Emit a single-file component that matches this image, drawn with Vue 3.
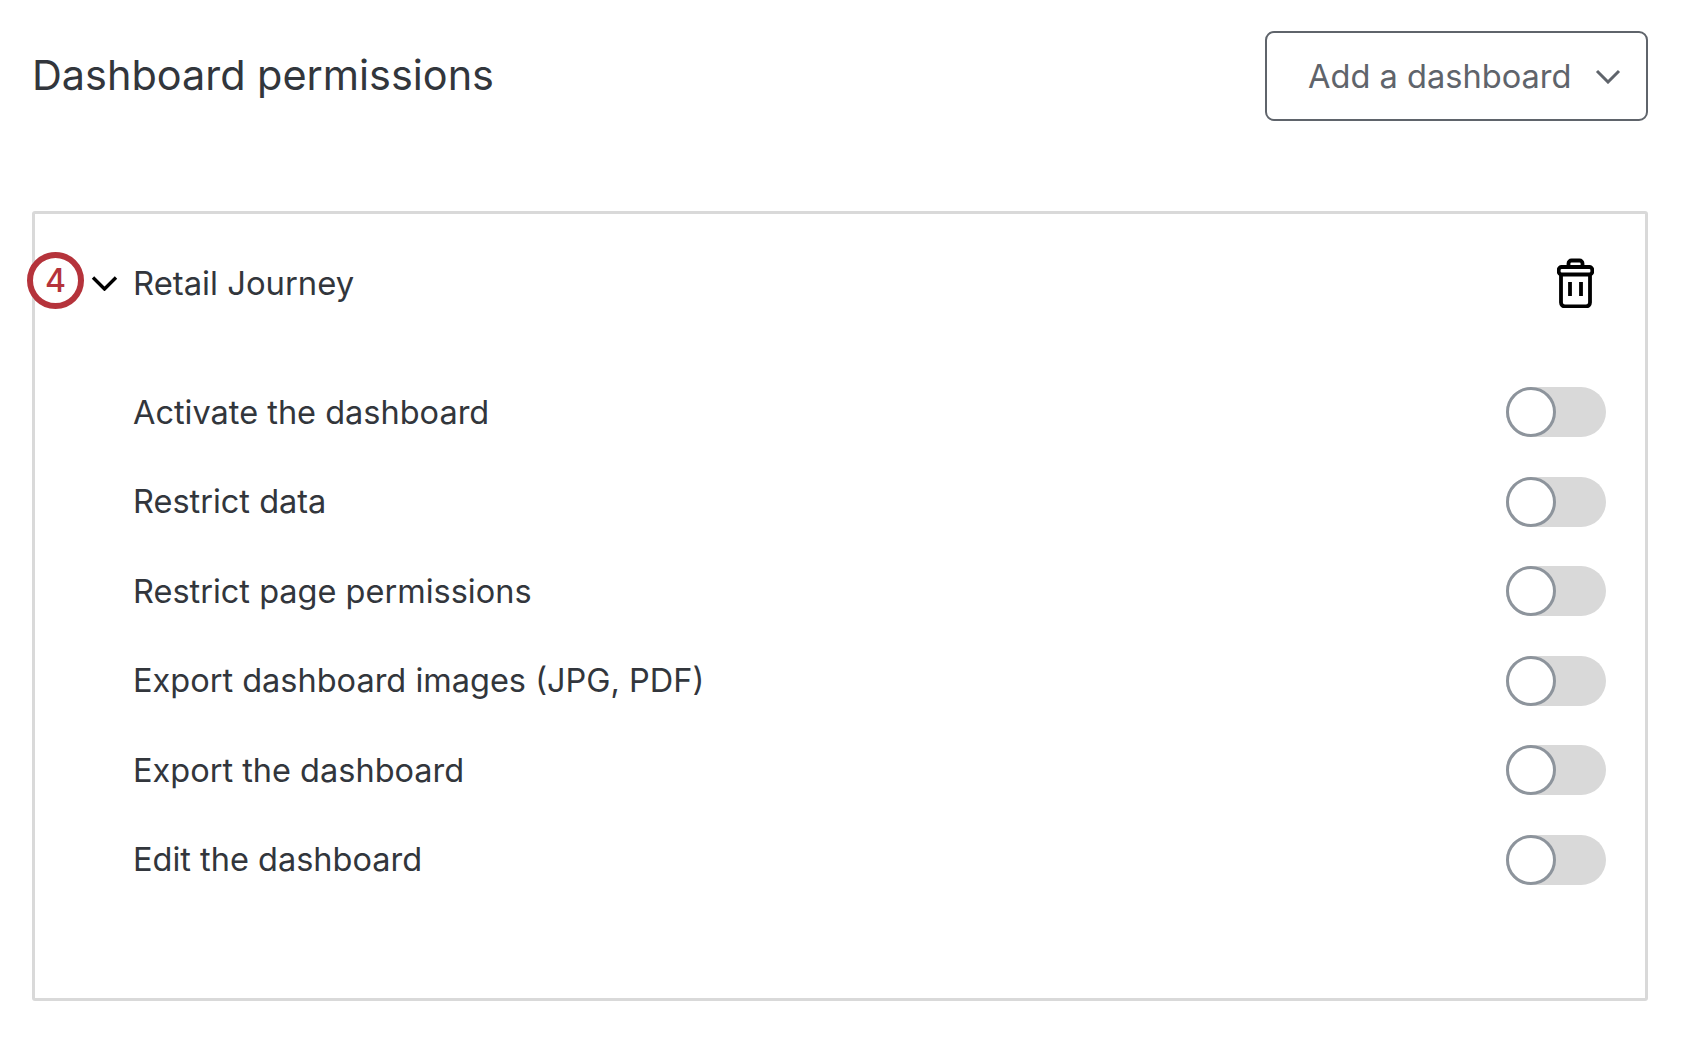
<template>
  <div class="page">
    <div class="header">
      <h1 class="title">Dashboard permissions</h1>
      <button class="add-btn">
        <span>Add a dashboard</span>
        <svg class="add-chevron" viewBox="0 0 26 16" fill="none">
          <path d="M2 3l11 11L24 3" stroke="#5f646b" stroke-width="3" />
        </svg>
      </button>
    </div>

    <div class="card">
      <div class="card-head">
        <div class="badge"><span>4</span></div>
        <svg class="chevron" viewBox="0 0 26 16" fill="none">
          <path d="M1.5 2.5L13 14 24.5 2.5" stroke="#000" stroke-width="3.4" />
        </svg>
        <div class="name">Retail Journey</div>
        <svg class="trash" viewBox="0 0 37 50" fill="none" stroke="#000" stroke-width="3.8" stroke-linejoin="round">
          <path d="M11.5 9V5.5a3 3 0 0 1 3-3h8a3 3 0 0 1 3 3V9" />
          <rect x="1.7" y="9" width="33.6" height="7.5" rx="3" />
          <path d="M4 16.5v28a4 4 0 0 0 4 4h21a4 4 0 0 0 4-4v-28" />
          <path d="M13 24v14M24 24v14" stroke-width="3.8" />
        </svg>
      </div>

      <div class="rows">
        <div v-for="row in rows" :key="row" class="row">
          <span>{{ row }}</span>
          <div class="toggle"><div class="knob"></div></div>
        </div>
      </div>
    </div>
  </div>
</template>

<script setup>
const rows = [
  'Activate the dashboard',
  'Restrict data',
  'Restrict page permissions',
  'Export dashboard images (JPG, PDF)',
  'Export the dashboard',
  'Edit the dashboard',
];
</script>

<style>
html, body {
  background: #fff;
}
</style>

<style scoped>
.page {
  box-sizing: border-box;
  width: 1700px;
  height: 1044px;
  padding: 31px 52px 0 32px;
  font-family: Inter, "Liberation Sans", sans-serif;
  color: #32363c;
}

.header {
  display: flex;
  justify-content: space-between;
  align-items: center;
  height: 90px;
}

.title {
  margin: -3px 0 0;
  font-size: 41.4px;
  font-weight: 400;
  line-height: 50px;
}

.add-btn {
  box-sizing: border-box;
  display: flex;
  align-items: center;
  justify-content: space-between;
  width: 383px;
  height: 90px;
  padding: 0 25px 0 41px;
  background: #fff;
  border: 2.5px solid #5f646b;
  border-radius: 9px;
  color: #5f646b;
  font-family: inherit;
  font-size: 32.6px;
}

.add-chevron {
  width: 26px;
  height: 16px;
}

.card {
  box-sizing: border-box;
  height: 790px;
  margin-top: 90px;
  padding: 0 39px 0 0;
  border: 3px solid #d9d9d9;
  border-radius: 3px;
}

.card-head {
  position: relative;
  display: flex;
  align-items: center;
  height: 138px;
  font-size: 32.8px;
}

.badge {
  position: absolute;
  left: -8px;
  top: 38px;
  box-sizing: border-box;
  display: flex;
  align-items: center;
  justify-content: center;
  width: 57px;
  height: 57px;
  border: 6px solid #b5333b;
  border-radius: 50%;
  background: #fff;
  color: #b5333b;
  font-size: 32px;
  font-weight: 500;
}

.chevron {
  width: 27px;
  height: 16px;
  margin-left: 56px;
}

.name {
  margin-left: 15px;
}

.trash {
  width: 37px;
  height: 50px;
  margin-left: auto;
  margin-right: 12px;
}

.rows {
  display: flex;
  flex-direction: column;
  padding-left: 98px;
  margin-top: 15.5px;
}

.row {
  display: flex;
  align-items: center;
  justify-content: space-between;
  height: 89.5px;
  font-size: 32.5px;
}

.toggle {
  position: relative;
  width: 100px;
  height: 50px;
  border-radius: 25px;
  background: #d9d9d9;
}

.knob {
  position: absolute;
  left: 0;
  top: 0;
  box-sizing: border-box;
  width: 50px;
  height: 50px;
  border: 3.5px solid #8d949c;
  border-radius: 50%;
  background: #fff;
}
</style>
